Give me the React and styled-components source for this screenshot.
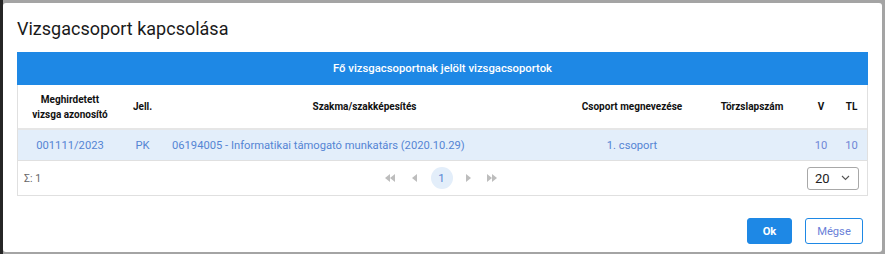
import React from "react";
import styled, { createGlobalStyle } from "styled-components";

const Global = createGlobalStyle`
  html, body { margin: 0; padding: 0; }
  body {
    width: 885px;
    height: 254px;
    overflow: hidden;
    font-family: Roboto, "Liberation Sans", sans-serif;
    background:
      linear-gradient(to right, #262626 0 3px, transparent 3px),
      linear-gradient(to bottom, #a4a4a4 0 100%);
  }
`;

const Backdrop = styled.div`
  padding: 3px 3px 2px 3px;
  height: 254px;
  box-sizing: border-box;
`;

const Dialog = styled.div`
  background: #fff;
  border-radius: 3px;
  height: 249px;
  box-sizing: border-box;
  padding: 0 14px 0 14px;
  display: flex;
  flex-direction: column;
`;

const Title = styled.h2`
  margin: 0;
  font-weight: 400;
  font-size: 18px;
  color: #1a1a1a;
  line-height: 24px;
  padding: 14px 0 11px 0;
`;

const Panel = styled.div`
  border: 1px solid #e0e0e0;
  border-top: none;
`;

const Banner = styled.div`
  background: #1e88e5;
  color: #fff;
  font-size: 11.3px;
  font-weight: 500;
  text-align: center;
  height: 33px;
  line-height: 33px;
  margin: 0 -1px;
`;

const Table = styled.table`
  width: 100%;
  border-collapse: collapse;
  table-layout: fixed;
`;

const Th = styled.th`
  font-size: 10px;
  font-weight: 700;
  color: #111;
  text-align: center;
  line-height: 15px;
  height: 43px;
  padding: 0;
  border-bottom: 2px solid #e6e6e6;
`;

const Row = styled.tr`
  background: #e3eefa;
`;

const Td = styled.td`
  font-size: 11.2px;
  color: ${(p) => (p.$num ? "#6f86d6" : "#5585d4")};
  text-align: ${(p) => p.$align || "center"};
  padding: ${(p) => (p.$align === "left" ? "0 0 0 9px" : "0")};
  height: 30px;
  border-bottom: 1px solid #e0e0e0;
  white-space: nowrap;
`;

const Footer = styled.div`
  display: grid;
  grid-template-columns: 1fr auto 1fr;
  align-items: center;
  height: 34px;
  padding: 0 8px 0 6px;
`;

const Sum = styled.span`
  font-size: 10.5px;
  color: #666;
`;

const Pager = styled.div`
  display: flex;
  align-items: center;
`;

const PageIcon = styled.span`
  width: 24px;
  display: flex;
  justify-content: center;
  color: #bdbdbd;
`;

const PageCurrent = styled.span`
  width: 22px;
  height: 22px;
  border-radius: 50%;
  background: #e3eefa;
  color: #5585d4;
  font-size: 11.5px;
  display: flex;
  align-items: center;
  justify-content: center;
  margin: 0 4px;
`;

const Select = styled.div`
  justify-self: end;
  width: 52px;
  height: 23px;
  box-sizing: border-box;
  border: 1px solid #a8a8a8;
  border-radius: 3px;
  display: flex;
  align-items: center;
  justify-content: space-between;
  padding: 0 8px 0 7px;
  font-size: 13px;
  color: #222;
`;

const Actions = styled.div`
  margin-top: auto;
  display: flex;
  justify-content: flex-end;
  gap: 13px;
  padding: 0 5px 8px 0;
`;

const Button = styled.button`
  height: 26px;
  box-sizing: border-box;
  border-radius: 3px;
  font-family: Roboto, "Liberation Sans", sans-serif;
  font-size: 11.2px;
  font-weight: ${(p) => (p.$primary ? 700 : 400)};
  width: ${(p) => (p.$primary ? 45 : 58)}px;
  padding: 0;
  border: 1px solid #1e88e5;
  background: ${(p) => (p.$primary ? "#1e88e5" : "#fff")};
  color: ${(p) => (p.$primary ? "#fff" : "#6a7fd8")};
`;

const Tri = ({ dir = "left", double }) => {
  const one = (x) =>
    dir === "left" ? `M${x + 5} 1 L${x} 5 L${x + 5} 9 Z` : `M${x} 1 L${x + 5} 5 L${x} 9 Z`;
  return (
    <svg width={double ? 11 : 6} height="10" viewBox={`0 0 ${double ? 11 : 6} 10`}>
      <path d={one(0)} fill="currentColor" />
      {double && <path d={one(5)} fill="currentColor" />}
    </svg>
  );
};

const Chevron = () => (
  <svg width="9" height="6" viewBox="0 0 9 6">
    <path d="M1 1 L4.5 4.5 L8 1" fill="none" stroke="#555" strokeWidth="1.1" />
  </svg>
);

export default function App() {
  return (
    <>
      <Global />
      <Backdrop>
        <Dialog>
          <Title>Vizsgacsoport kapcsolása</Title>
          <Panel>
            <Banner>Fő vizsgacsoportnak jelölt vizsgacsoportok</Banner>
            <Table>
              <colgroup>
                <col style={{ width: 104 }} />
                <col style={{ width: 41 }} />
                <col style={{ width: 403 }} />
                <col style={{ width: 132 }} />
                <col style={{ width: 108 }} />
                <col style={{ width: 30 }} />
                <col style={{ width: 31 }} />
              </colgroup>
              <thead>
                <tr>
                  <Th>
                    Meghirdetett
                    <br />
                    vizsga azonosító
                  </Th>
                  <Th>Jell.</Th>
                  <Th>Szakma/szakképesítés</Th>
                  <Th>Csoport megnevezése</Th>
                  <Th>Törzslapszám</Th>
                  <Th>V</Th>
                  <Th>TL</Th>
                </tr>
              </thead>
              <tbody>
                <Row>
                  <Td>001111/2023</Td>
                  <Td>PK</Td>
                  <Td $align="left">06194005 - Informatikai támogató munkatárs (2020.10.29)</Td>
                  <Td>1. csoport</Td>
                  <Td></Td>
                  <Td $num>10</Td>
                  <Td $num>10</Td>
                </Row>
              </tbody>
            </Table>
            <Footer>
              <Sum>Σ: 1</Sum>
              <Pager>
                <PageIcon><Tri dir="left" double /></PageIcon>
                <PageIcon><Tri dir="left" /></PageIcon>
                <PageCurrent>1</PageCurrent>
                <PageIcon><Tri dir="right" /></PageIcon>
                <PageIcon><Tri dir="right" double /></PageIcon>
              </Pager>
              <Select>
                <span>20</span>
                <Chevron />
              </Select>
            </Footer>
          </Panel>
          <Actions>
            <Button $primary>Ok</Button>
            <Button>Mégse</Button>
          </Actions>
        </Dialog>
      </Backdrop>
    </>
  );
}
